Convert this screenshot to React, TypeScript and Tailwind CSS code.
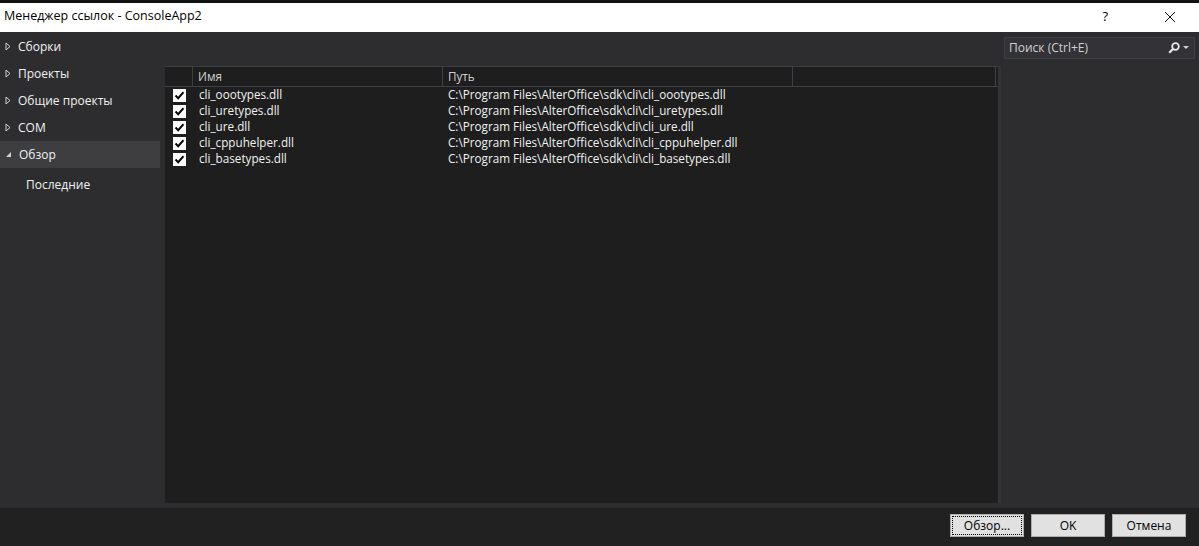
const navItems = [
  { label: 'Сборки', open: false },
  { label: 'Проекты', open: false },
  { label: 'Общие проекты', open: false },
  { label: 'COM', open: false },
  { label: 'Обзор', open: true },
];

const refs = [
  'cli_oootypes.dll',
  'cli_uretypes.dll',
  'cli_ure.dll',
  'cli_cppuhelper.dll',
  'cli_basetypes.dll',
];

function Check() {
  return (
    <span className="w-[13px] h-[13px] bg-white flex items-center justify-center">
      <svg width="11" height="11" viewBox="0 0 11 11">
        <path d="M1.5 5.5 L4.2 8.2 L9.5 2.2" stroke="#000" strokeWidth="2" fill="none" />
      </svg>
    </span>
  );
}

function Arrow({ open }: { open: boolean }) {
  return open ? (
    <svg width="7" height="7" viewBox="0 0 7 7" className="shrink-0">
      <path d="M6 1 L6 6 L1 6 Z" fill="#d0d0d0" />
    </svg>
  ) : (
    <svg width="6" height="9" viewBox="0 0 6 9" className="shrink-0">
      <path d="M1 1 L5 4.5 L1 8 Z" fill="none" stroke="#d0d0d0" strokeWidth="1" />
    </svg>
  );
}

export default function App() {
  return (
    <div
      className="w-[1199px] h-[546px] flex flex-col bg-[#2d2d30] text-[#f1f1f1] overflow-hidden"
      style={{ fontFamily: '"Open Sans", "Noto Sans", sans-serif' }}
    >
      <div className="h-[3px] bg-[#111]" />
      <div className="h-[29px] bg-white flex items-center text-black text-[12.5px] pl-[4px] pb-[2px]">
        <span>Менеджер ссылок - ConsoleApp2</span>
        <span className="ml-auto mr-[56px] text-[13px]">?</span>
        <svg width="12" height="12" viewBox="0 0 12 12" className="mr-[23px]">
          <path d="M1 1 L11 11 M11 1 L1 11" stroke="#111" strokeWidth="1" />
        </svg>
      </div>

      <div className="flex-1 flex min-h-0">
        {/* left nav */}
        <div className="w-[160px] pt-[1px] text-[12px]">
          {navItems.map((n) => (
            <div
              key={n.label}
              className={`h-[27px] flex items-center gap-[7px] pl-[5px] ${n.open ? 'bg-[#3e3e40]' : ''}`}
            >
              <Arrow open={n.open} />
              <span>{n.label}</span>
            </div>
          ))}
          <div className="h-[33px] flex items-center pl-[26px]">Последние</div>
        </div>

        {/* list */}
        <div className="w-[841px] pl-[5px] pt-[34px] pb-[4px] flex">
          <div className="flex-1 bg-[#1e1e1e] border-t border-[#3f3f46] flex flex-col text-[11.7px]">
            <div className="h-[20px] shrink-0 flex border-b border-[#3f3f46] text-[#d0d0d0]">
              <div className="w-[28px] border-r border-[#3f3f46]" />
              <div className="w-[250px] pl-[5px] flex items-center border-r border-[#3f3f46]">Имя</div>
              <div className="w-[350px] pl-[5px] flex items-center border-r border-[#3f3f46]">Путь</div>
              <div className="flex-1 border-r border-[#3f3f46] mr-[2px]" />
            </div>
            <div>
              {refs.map((r) => (
                <div key={r} className="h-[16px] flex items-center">
                  <div className="w-[28px] flex justify-center pl-[1px]">
                    <Check />
                  </div>
                  <div className="w-[250px] pl-[6px]">{r}</div>
                  <div className="pl-[5px]">C:\Program Files\AlterOffice\sdk\cli\{r}</div>
                </div>
              ))}
            </div>
          </div>
          <div className="w-[3px] bg-[#333336]" />
        </div>

        {/* right panel */}
        <div className="flex-1 pt-[5px] pl-[3px] pr-[4px]">
          <div className="h-[22px] bg-[#333337] border border-[#3f3f46] flex items-center px-[4px] text-[12px] text-[#d0d0d0]">
            <span>Поиск (Ctrl+E)</span>
            <svg width="12" height="12" viewBox="0 0 12 12" className="ml-auto">
              <circle cx="7.5" cy="4.5" r="3.3" fill="none" stroke="#e8e8e8" strokeWidth="1.8" />
              <path d="M5 7 L1.2 10.8" stroke="#e8e8e8" strokeWidth="2.2" />
            </svg>
            <svg width="6" height="4" viewBox="0 0 6 4" className="ml-[3px] mr-[1px]">
              <path d="M0 0 L6 0 L3 3 Z" fill="#d0d0d0" />
            </svg>
          </div>
        </div>
      </div>

      <div className="h-[39px] bg-[#212121] border-t border-[#2a2a2a] flex items-start justify-end gap-[7px] pt-[6px] pr-[13px] text-[12px] text-black">
        <button className="w-[74px] h-[23px] bg-[#e1e1e1] border border-[#adadad] flex items-center justify-center">
          <span className="w-[70px] h-[19px] border border-dotted border-black flex items-center justify-center">
            Обзор...
          </span>
        </button>
        <button className="w-[74px] h-[23px] bg-[#e1e1e1] border border-[#adadad]">OK</button>
        <button className="w-[74px] h-[23px] bg-[#e1e1e1] border border-[#adadad]">Отмена</button>
      </div>
    </div>
  );
}
